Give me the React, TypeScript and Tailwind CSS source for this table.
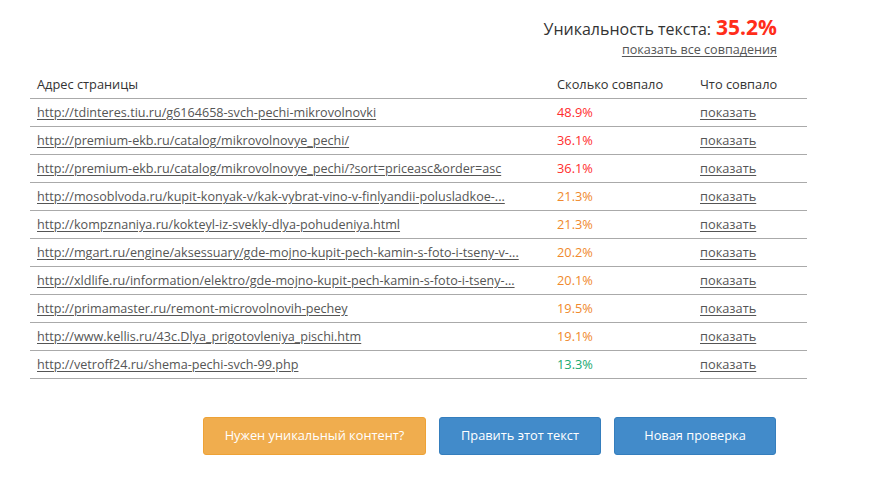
import React from 'react';

type Row = { url: string; pct: string; color: string };

const rows: Row[] = [
  { url: 'http://tdinteres.tiu.ru/g6164658-svch-pechi-mikrovolnovki', pct: '48.9%', color: 'text-[#ff2d2d]' },
  { url: 'http://premium-ekb.ru/catalog/mikrovolnovye_pechi/', pct: '36.1%', color: 'text-[#ff2d2d]' },
  { url: 'http://premium-ekb.ru/catalog/mikrovolnovye_pechi/?sort=priceasc&order=asc', pct: '36.1%', color: 'text-[#ff2d2d]' },
  { url: 'http://mosoblvoda.ru/kupit-konyak-v/kak-vybrat-vino-v-finlyandii-polusladkoe-...', pct: '21.3%', color: 'text-[#f0892c]' },
  { url: 'http://kompznaniya.ru/kokteyl-iz-svekly-dlya-pohudeniya.html', pct: '21.3%', color: 'text-[#f0892c]' },
  { url: 'http://mgart.ru/engine/aksessuary/gde-mojno-kupit-pech-kamin-s-foto-i-tseny-v-...', pct: '20.2%', color: 'text-[#f0892c]' },
  { url: 'http://xldlife.ru/information/elektro/gde-mojno-kupit-pech-kamin-s-foto-i-tseny-...', pct: '20.1%', color: 'text-[#f0892c]' },
  { url: 'http://primamaster.ru/remont-microvolnovih-pechey', pct: '19.5%', color: 'text-[#f0892c]' },
  { url: 'http://www.kellis.ru/43c.Dlya_prigotovleniya_pischi.htm', pct: '19.1%', color: 'text-[#f0892c]' },
  { url: 'http://vetroff24.ru/shema-pechi-svch-99.php', pct: '13.3%', color: 'text-[#1aa970]' },
];

export default function App() {
  return (
    <div className="w-[895px] h-[493px] bg-white font-['Open_Sans',sans-serif] text-[#333]">
      <div className="ml-[30px] w-[777px] pt-[13px]">
        {/* uniqueness header */}
        <div className="pr-[30px] flex flex-col items-end">
          <div className="flex items-baseline leading-[28px]">
            <span className="text-[16px] text-[#333]">Уникальность текста:</span>
            <span className="ml-[5px] text-[21px] font-bold text-[#ff2d1a]">35.2%</span>
          </div>
          <a className="-mt-[1px] text-[12.6px] leading-[15px] text-[#555] underline underline-offset-2">
            показать все совпадения
          </a>
        </div>

        {/* results table */}
        <table className="mt-[14px] w-[777px] border-collapse text-[12.8px] leading-[19px]">
          <thead>
            <tr className="border-b border-[#aaa]">
              <th className="w-[520px] text-left font-normal pl-[7px] pt-[4px] pb-[4px]">Адрес страницы</th>
              <th className="w-[143px] text-left font-normal pl-[7px] pt-[4px] pb-[4px]">Сколько совпало</th>
              <th className="text-left font-normal pl-[7px] pt-[4px] pb-[4px]">Что совпало</th>
            </tr>
          </thead>
          <tbody>
            {rows.map((r, i) => (
              <tr key={i} className="border-b border-[#aaa]">
                <td className="pl-[7px] py-[4px] h-[28px]">
                  <a className="text-[12.6px] text-[#555] underline underline-offset-2 whitespace-nowrap">{r.url}</a>
                </td>
                <td className={`pl-[7px] py-[4px] ${r.color}`}>{r.pct}</td>
                <td className="pl-[7px] py-[4px]">
                  <a className="text-[#555] underline underline-offset-2">показать</a>
                </td>
              </tr>
            ))}
          </tbody>
        </table>

        {/* actions */}
        <div className="mt-[38px] pr-[31px] flex justify-end gap-[13px] text-[12.8px] text-white">
          <button className="w-[223px] h-[38px] rounded-[3px] bg-[#f0ad4e] border border-[#eea236]">
            Нужен уникальный контент?
          </button>
          <button className="w-[162px] h-[38px] rounded-[3px] bg-[#428bca] border border-[#357ebd]">
            Править этот текст
          </button>
          <button className="w-[162px] h-[38px] rounded-[3px] bg-[#428bca] border border-[#357ebd]">
            Новая проверка
          </button>
        </div>
      </div>
    </div>
  );
}
